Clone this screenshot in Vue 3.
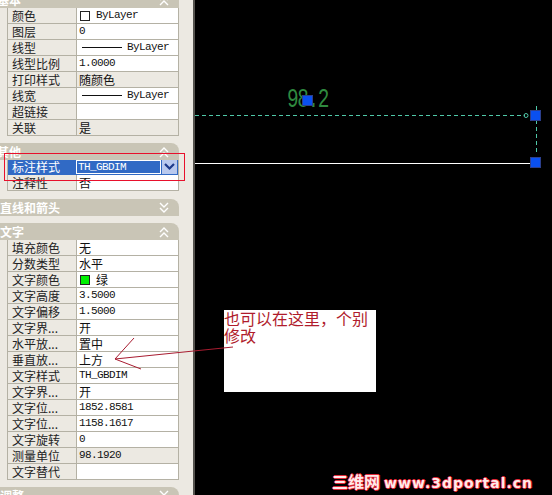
<template>
  <div class="screen">
    <aside class="panel">
      <section v-for="group in groups" :key="group.title" class="group" :class="group.cls">
        <header class="group-head">
          <span>{{ group.title }}</span>
          <svg width="12" height="12" viewBox="0 0 12 12" class="chevron">
            <path :d="group.open ? 'M2 6l4-4 4 4M2 11l4-4 4 4' : 'M2 1l4 4 4-4M2 6l4 4 4-4'" fill="none" stroke="#fff" stroke-width="1.4" />
          </svg>
        </header>
        <div v-if="group.rows" class="rows">
          <div v-for="(row, i) in group.rows" :key="i" class="row" :class="{ selected: row.selected }">
            <div class="label">{{ row.label }}</div>
            <div class="value" :class="{ readonly: row.readonly }">
              <template v-if="row.selected">
                <span class="select-text">{{ row.value }}</span>
                <span class="select-btn">
                  <svg width="11" height="8" viewBox="0 0 11 8"><path d="M1 1l4.500 4.500L10 1" fill="none" stroke="#1d3a8a" stroke-width="2.200" /></svg>
                </span>
              </template>
              <template v-else-if="row.line">
                <i class="line-sample"></i><span class="latin">{{ row.value }}</span>
              </template>
              <template v-else-if="row.swatch">
                <i class="swatch" :style="{ background: row.swatch }"></i><span :class="{ latin: row.latin }">{{ row.value }}</span>
              </template>
              <span v-else :class="{ latin: row.latin }">{{ row.value }}</span>
            </div>
          </div>
        </div>
      </section>
    </aside>

    <main class="canvas">
      <svg class="drawing" width="357" height="495" viewBox="195 0 357 495">
        <path d="M195 115.500H525" stroke="#4fc8a8" stroke-dasharray="4 3" />
        <path d="M536.500 106V155" stroke="#4fc8a8" stroke-dasharray="4 3" />
        <circle cx="526" cy="115.500" r="2" fill="none" stroke="#4fc8a8" />
        <path d="M195 163.500H531" stroke="#fff" />
      </svg>
      <span class="dim-text">98.2</span>
      <i class="grip grip-text"></i>
      <i class="grip grip-top"></i>
      <i class="grip grip-bottom"></i>
      <div class="watermark">三维网<span>www.3dportal.cn</span></div>
    </main>

    <div class="note">也可以在这里，个别修改</div>
    <svg class="arrow" width="552" height="495" viewBox="0 0 552 495">
      <rect x="4.500" y="153.500" width="180" height="27" fill="none" stroke="#e8102c" />
      <path d="M233 347L115 359M134 338L115 359L141 369" fill="none" stroke="#a81c30" />
    </svg>
  </div>
</template>

<script setup>
const groups = [
  {
    title: '基本',
    cls: 'first',
    open: true,
    rows: [
      { label: '颜色', value: 'ByLayer', swatch: '#fff', latin: true },
      { label: '图层', value: '0', latin: true },
      { label: '线型', value: 'ByLayer', line: true },
      { label: '线型比例', value: '1.0000', latin: true },
      { label: '打印样式', value: '随颜色', readonly: true },
      { label: '线宽', value: 'ByLayer', line: true },
      { label: '超链接', value: '' },
      { label: '关联', value: '是', readonly: true },
    ],
  },
  {
    title: '其他',
    cls: 'other',
    open: true,
    rows: [
      { label: '标注样式', value: 'TH_GBDIM', selected: true },
      { label: '注释性', value: '否' },
    ],
  },
  { title: '直线和箭头', open: false },
  {
    title: '文字',
    open: true,
    rows: [
      { label: '填充颜色', value: '无' },
      { label: '分数类型', value: '水平' },
      { label: '文字颜色', value: '绿', swatch: '#00f000' },
      { label: '文字高度', value: '3.5000', latin: true },
      { label: '文字偏移', value: '1.5000', latin: true },
      { label: '文字界...', value: '开' },
      { label: '水平放...', value: '置中' },
      { label: '垂直放...', value: '上方' },
      { label: '文字样式', value: 'TH_GBDIM', latin: true },
      { label: '文字界...', value: '开' },
      { label: '文字位...', value: '1852.8581', latin: true },
      { label: '文字位...', value: '1158.1617', latin: true },
      { label: '文字旋转', value: '0', latin: true },
      { label: '测量单位', value: '98.1920', latin: true, readonly: true },
      { label: '文字替代', value: '' },
    ],
  },
  { title: '调整', open: false },
];
</script>

<style scoped>
* {
  box-sizing: border-box;
}

.screen {
  position: relative;
  display: flex;
  width: 552px;
  height: 495px;
  overflow: hidden;
  font-family: "Noto Sans CJK SC", "Liberation Sans", sans-serif;
  font-size: 12px;
  color: #111;
}

.panel {
  flex: 0 0 195px;
  background: #ece9e2;
  border-right: 2px solid #55534e;
  margin-top: -9px;
  height: 504px;
}

.group {
  margin-top: 7px;
  width: 179px;
}

.group.first {
  margin-top: 0;
}

.group.other {
  margin-bottom: 8px;
}

.group.other .rows {
  margin-top: -1px;
}

.group-head {
  position: relative;
  height: 17px;
  line-height: 17px;
  background: #c9c5b6;
  border-top-right-radius: 8px;
  color: #fff;
  font-weight: 700;
  white-space: nowrap;
}

.first .group-head span,
.other .group-head span {
  margin-left: -3px;
}

.chevron {
  position: absolute;
  top: 3px;
  left: 158px;
}

.rows {
  margin-left: 7px;
  border-left: 1px solid #b4b1a4;
  border-right: 1px solid #b4b1a4;
}

.row {
  display: flex;
  height: 16px;
  line-height: 15px;
  border-bottom: 1px solid #b4b1a4;
}

.label {
  flex: 0 0 68px;
  padding-left: 4px;
  white-space: nowrap;
  color: #222;
}

.value {
  flex: 1;
  display: flex;
  align-items: center;
  padding-left: 2px;
  background: #fff;
  border-left: 1px solid #b4b1a4;
  white-space: nowrap;
}

.value.readonly {
  background: #ece9e2;
}

.latin {
  font-family: "Liberation Mono", monospace;
  font-size: 11px;
  letter-spacing: -0.6px;
  color: #111;
}

.swatch {
  width: 10px;
  height: 10px;
  margin: 0 6px 0 1px;
  border: 1px solid #222;
}

.line-sample {
  width: 40px;
  height: 1px;
  margin: 0 5px 0 3px;
  background: #111;
}

.row.selected {
  background: #316ac5;
  border-bottom-color: #316ac5;
}

.row.selected .label {
  color: #fff;
}

.row.selected .value {
  padding: 0;
  background: #316ac5;
  border-left: 0;
}

.select-text {
  flex: 1;
  height: 14px;
  line-height: 12px;
  padding-left: 1px;
  border: 1px solid #fff;
  font-family: "Liberation Mono", monospace;
  font-size: 11px;
  letter-spacing: -0.6px;
  color: #fff;
}

.select-btn {
  display: flex;
  align-items: center;
  justify-content: center;
  width: 15px;
  height: 14px;
  margin: 0 1px;
  background: #b9c9ee;
}

.canvas {
  position: relative;
  flex: 1;
  background: #000;
}

.drawing {
  position: absolute;
  top: 0;
  left: 0;
}

.dim-text {
  position: absolute;
  top: 85px;
  left: 92px;
  font-family: "Liberation Mono", monospace;
  font-size: 27px;
  line-height: 30px;
  letter-spacing: -2px;
  transform: scaleX(0.72);
  transform-origin: left top;
  color: #2f8a3f;
}

.grip {
  position: absolute;
  width: 11px;
  height: 11px;
  background: #0a50f0;
  border: 1px solid #2c3f8c;
}

.grip-text {
  top: 95px;
  left: 107px;
}

.grip-top {
  top: 110px;
  left: 335px;
}

.grip-bottom {
  top: 157px;
  left: 335px;
}

.watermark {
  position: absolute;
  top: 472px;
  left: 137px;
  font-size: 16px;
  line-height: 18px;
  font-weight: 700;
  white-space: nowrap;
  color: #ffeaea;
  text-shadow: 1px 0 #e02838, -1px 0 #e02838, 0 1px #e02838, 0 -1px #e02838;
}

.watermark span {
  margin-left: 4px;
  font-family: "DejaVu Sans", sans-serif;
  font-size: 14px;
  letter-spacing: 1px;
}

.note {
  position: absolute;
  top: 310px;
  left: 224px;
  width: 152px;
  height: 82px;
  font-size: 16px;
  line-height: 17px;
  background: #fff;
  color: #b01c2c;
}

.arrow {
  position: absolute;
  top: 0;
  left: 0;
  pointer-events: none;
}
</style>

<style>
html,
body {
  margin: 0;
  background: #000;
}
</style>
